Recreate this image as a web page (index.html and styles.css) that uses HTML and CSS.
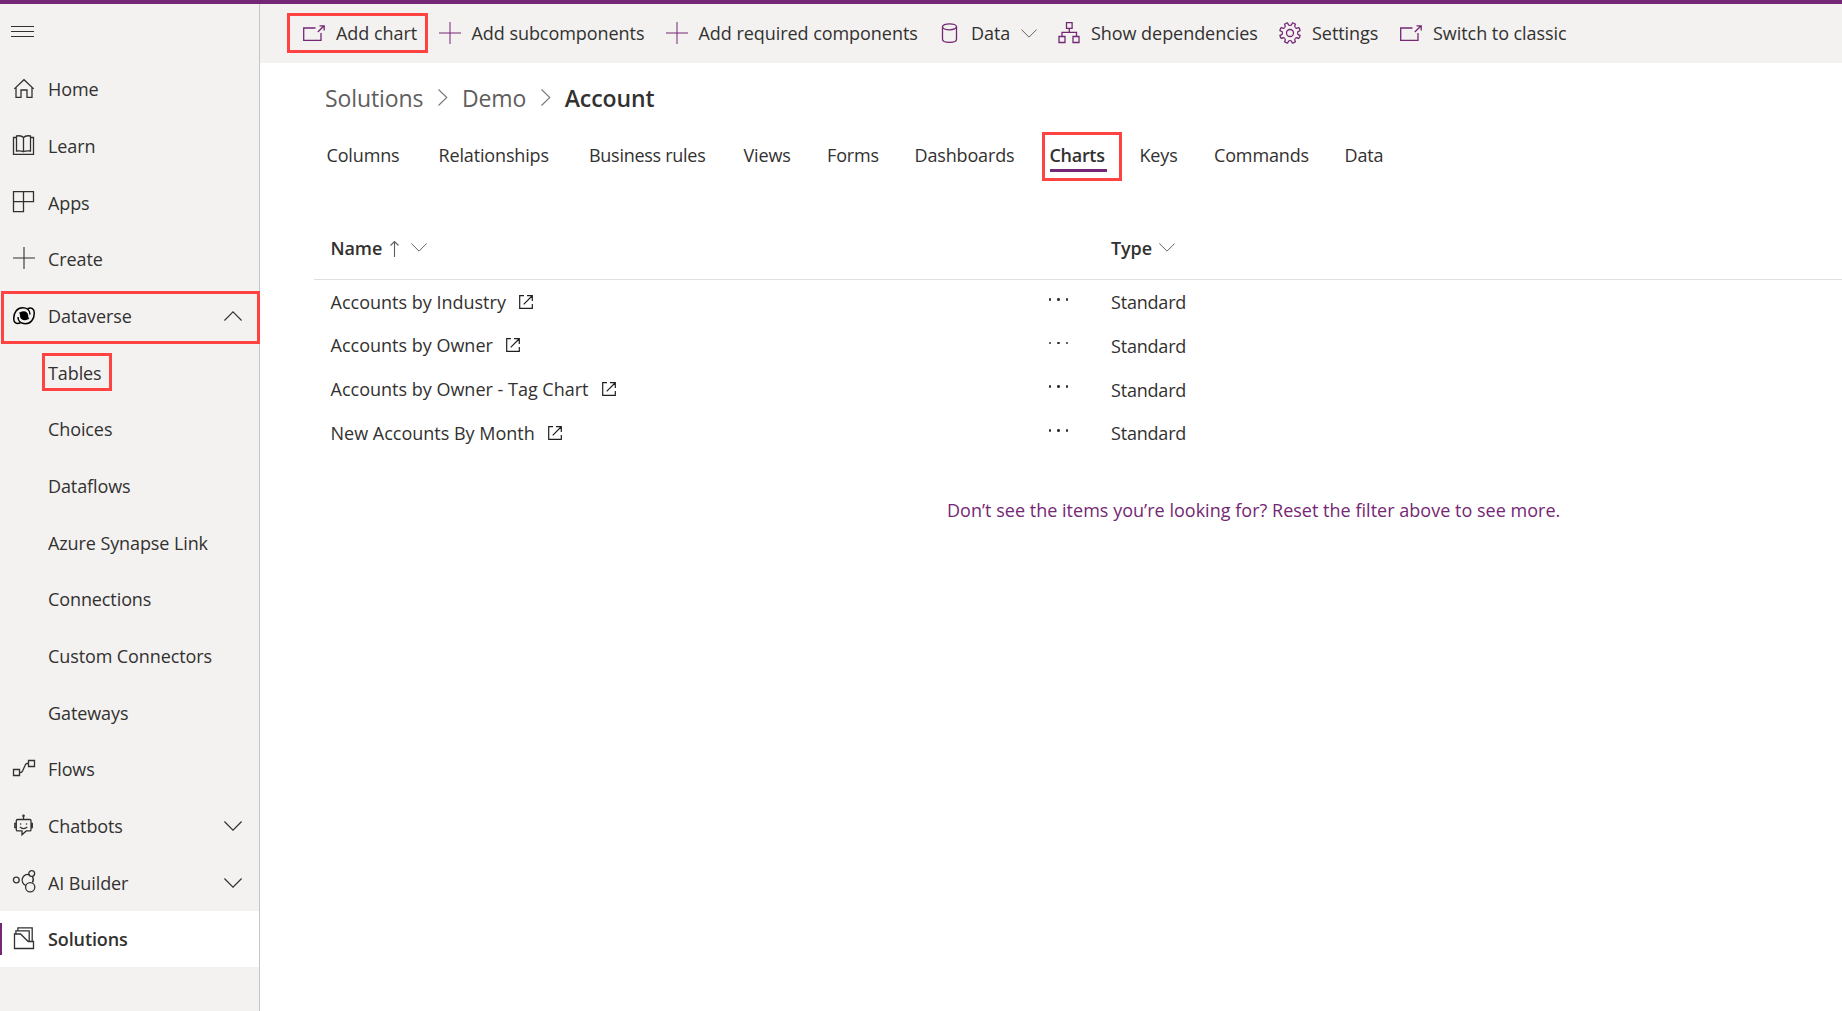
FILE: index.html
```
<!DOCTYPE html>
<html lang="en">
<head>
<meta charset="utf-8">
<title>Account - Charts</title>
<link rel="stylesheet" href="styles.css">
</head>
<body>
<svg class="defs" aria-hidden="true">
  <symbol id="open" viewBox="0 0 22 22"><path d="M12.500 6H.7v12.300H18V11M14.800 10l6-6M16.500 3.800h4.700v4.700"/></symbol>
  <symbol id="plus" viewBox="0 0 22 22"><path d="M0 11h22M11 0v22"/></symbol>
  <symbol id="popout" viewBox="0 0 14 14"><path d="M5 .7H.7v12.600h12.600V9M4.700 9.300L13 1M8 .7h5.300V6"/></symbol>
  <symbol id="down" viewBox="0 0 18 10"><path d="M.4.500L9 9.100 17.600.500"/></symbol>
</svg>
<div class="accent"></div>
<div class="shell">
  <nav class="sidebar">
    <div class="menu"><svg width="23" height="12" viewBox="0 0 23 12"><path d="M0 .500h23M0 5.500h23M0 10.500h23"/></svg></div>
    <a class="item"><svg class="icon" viewBox="0 0 24 24"><path d="M2.300 11.900L12 2.700l9.700 9.200M4 10.500v9.800h5V13h6v7.300h5v-9.800"/></svg>Home</a>
    <a class="item"><svg class="icon" viewBox="0 0 24 24"><path d="M4.500 3.500h-3v16.800h20V3.500h-3M11.500 17.500V3.500C10 1.800 6.500 1.600 4.500 2v15c3-.4 5.500-.2 7 .8 1.500-1 4-1.200 7-.8V2c-2-.4-5.500-.2-7 1.500"/></svg>Learn</a>
    <a class="item"><svg class="icon" viewBox="0 0 24 24"><path d="M1.500.700h20v10h-20zM11.500.700v20h-10v-10"/></svg>Apps</a>
    <a class="item"><svg class="icon" viewBox="0 0 24 24"><path class="thin" d="M1 11h22M12 0v22"/></svg>Create</a>
    <a class="item marked"><svg class="icon dv" viewBox="0 0 24 24"><path d="M8.500 18.800C4.500 20.500 1.700 19 1.700 14.500 1.700 8 5.500 3.800 10.500 3.800c4.500 0 7.500 2.700 7.500 6.700"/><path d="M15.500 4.700C19.500 3 22.300 4.500 22.300 9c0 6.500-3.800 10.700-8.800 10.700-4.500 0-7.500-2.700-7.500-6.700"/><path class="fill" d="M7 8.500c1.500.3 2-1.200 4.500-1.200 3 0 4.500 1.800 4.700 4.200.1 1.800.6 2.800 1.300 3.500-1.500-.3-2 1.200-4.500 1.200-3 0-5-1.700-5-4.200 0-1.700-.3-2.700-1-3.500z"/></svg>Dataverse<svg class="chev up"><use href="#down"/></svg></a>
    <a class="item sub"><span class="boxed">Tables</span></a>
    <a class="item sub">Choices</a>
    <a class="item sub">Dataflows</a>
    <a class="item sub">Azure Synapse Link</a>
    <a class="item sub">Connections</a>
    <a class="item sub">Custom Connectors</a>
    <a class="item sub">Gateways</a>
    <a class="item"><svg class="icon" viewBox="0 0 24 24"><path d="M1.500 12.500h6v6h-6zM16.500 3.500h6v6h-6zM7.500 15.500h1.300c1 0 1.200-.5 1.600-1.300l3-6.400c.4-.9.700-1.300 1.600-1.300h1.500"/></svg>Flows</a>
    <a class="item"><svg class="icon" viewBox="0 0 24 24"><path d="M5.500 5.500h12.300c.8 0 1.200.4 1.200 1.200v9c0 .8-.4 1.200-1.200 1.200h-3.600L10 20.700v-3.800H5.500c-.8 0-1.200-.4-1.200-1.200v-9c0-.8.4-1.200 1.200-1.200zM11.500 5.500V2M4.300 9.500H2.800v4h1.500M19 9.500h1.300v4H19M8 12.800c1.800 2.300 5.400 2.300 7.200 0"/><circle class="fill" cx="11.500" cy="1.800" r="1.300"/><circle class="fill" cx="8.700" cy="10" r=".8"/><circle class="fill" cx="14.500" cy="10" r=".8"/></svg>Chatbots<svg class="chev"><use href="#down"/></svg></a>
    <a class="item"><svg class="icon" viewBox="0 0 24 24"><circle cx="4.300" cy="9" r="2.900"/><path d="M13.800 14.500a5.700 5.700 0 1 1 4-10.700M20.300 5.300c1.300 1.900 1.300 4.300.2 6.300"/><circle cx="19.700" cy="2.500" r="2.900"/><circle cx="18.200" cy="16.200" r="4.600"/></svg>AI Builder<svg class="chev"><use href="#down"/></svg></a>
    <a class="item selected"><svg class="icon" viewBox="0 0 24 24"><path d="M2.500 21.500V7h6l7.700 7.500h5.300v7zM3.900 7V3.800h13.300v10.700M5.900 3.800V.800h14.300v13.700"/></svg>Solutions</a>
  </nav>
  <main class="main">
    <div class="commands">
      <a class="cmd framed"><svg class="tool"><use href="#open"/></svg>Add chart</a>
      <a class="cmd"><svg class="tool thin"><use href="#plus"/></svg>Add subcomponents</a>
      <a class="cmd"><svg class="tool thin"><use href="#plus"/></svg>Add required components</a>
      <a class="cmd"><svg class="tool" viewBox="0 0 22 22"><path d="M4.500 4.800v12.400c0 4.200 14 4.200 14 0V4.800"/><ellipse cx="11.500" cy="4.800" rx="7" ry="3"/></svg>Data<svg class="caret"><use href="#down"/></svg></a>
      <a class="cmd"><svg class="tool" viewBox="0 0 22 22"><path d="M8.500.700h5.600v5.600H8.500zM11.300 6.300v4M4 14.500v-4.200h14.500v4.200M1 14.500h6v6H1zM15 14.500h6v6h-6z"/></svg>Show dependencies</a>
      <a class="cmd"><svg class="tool" viewBox="-11 -11 22 22"><g transform="rotate(22.500)"><path id="tooth" d="M-3.020-7.300C-2-6.900-1.600-8-1.600-10.200Q0-10.700 1.600-10.200C1.600-8 2-6.900 3.020-7.300"/><use href="#tooth" transform="rotate(45)"/><use href="#tooth" transform="rotate(90)"/><use href="#tooth" transform="rotate(135)"/><use href="#tooth" transform="rotate(180)"/><use href="#tooth" transform="rotate(225)"/><use href="#tooth" transform="rotate(270)"/><use href="#tooth" transform="rotate(315)"/></g><circle r="3.500"/></svg>Settings</a>
      <a class="cmd"><svg class="tool"><use href="#open"/></svg>Switch to classic</a>
    </div>
    <div class="crumbs">
      <span>Solutions</span><svg class="sep" viewBox="0 0 10 17"><path d="M.500.500l8.300 8-8.300 8"/></svg><span>Demo</span><svg class="sep" viewBox="0 0 10 17"><path d="M.500.500l8.300 8-8.300 8"/></svg><b>Account</b>
    </div>
    <div class="tabs">
      <a>Columns</a><a>Relationships</a><a class="snug">Business rules</a><a>Views</a><a>Forms</a><a>Dashboards</a><a class="active">Charts</a><a>Keys</a><a>Commands</a><a>Data</a>
    </div>
    <div class="table">
      <div class="row head"><div class="name">Name<svg class="sort" viewBox="0 0 9 16"><path d="M4.500.500V16M.500 4.500l4-4 4 4"/></svg><svg class="caret"><use href="#down"/></svg></div><span></span><div>Type<svg class="caret"><use href="#down"/></svg></div></div>
      <div class="row"><div class="name">Accounts by Industry<svg class="ext"><use href="#popout"/></svg></div><span class="dots"><i></i><i></i><i></i></span><div class="type">Standard</div></div>
      <div class="row"><div class="name">Accounts by Owner<svg class="ext"><use href="#popout"/></svg></div><span class="dots"><i></i><i></i><i></i></span><div class="type">Standard</div></div>
      <div class="row"><div class="name">Accounts by Owner - Tag Chart<svg class="ext"><use href="#popout"/></svg></div><span class="dots"><i></i><i></i><i></i></span><div class="type">Standard</div></div>
      <div class="row"><div class="name">New Accounts By Month<svg class="ext"><use href="#popout"/></svg></div><span class="dots"><i></i><i></i><i></i></span><div class="type">Standard</div></div>
    </div>
    <p class="hint">Don’t see the items you’re looking for? Reset the filter above to see more.</p>
  </main>
</div>
</body>
</html>
```
FILE: styles.css
```
*, *::before, *::after { box-sizing: border-box; }
body {
  margin: 0;
  height: 1011px;
  overflow: hidden;
  display: flex;
  flex-direction: column;
  font: 18px/24px "Open Sans", sans-serif;
  color: #323130;
  background: #fff;
}
svg { fill: none; stroke: #323130; stroke-width: 1.3; overflow: visible; flex: none; }
.defs { position: absolute; width: 0; height: 0; }
.fill { fill: #323130; stroke: none; }
.thin { stroke-width: 1.1; }
.accent { height: 4px; background: #742774; }
.shell { flex: 1; display: flex; min-height: 0; }

.sidebar { width: 260px; background: #f3f2f1; border-right: 1px solid #c8c6c4; }
.menu { height: 56.800px; padding: 22px 0 0 11px; }
.menu svg { display: block; stroke-width: 1; }
.item {
  position: relative;
  display: flex;
  align-items: center;
  height: 56.700px;
  padding: 0 17px 0 12px;
  letter-spacing: -.1px;
}
.icon { width: 24px; height: 24px; margin-right: 12px; }
.dv { stroke: #000; stroke-width: 1.500; }
.dv .fill { fill: #000; }
.sub { padding-left: 48px; }
.chev { width: 18px; height: 10px; margin-left: auto; stroke-width: 1.200; }
.up { transform: rotate(180deg); }
.selected { background: #fff; font-weight: 600; letter-spacing: -.1px; height: 56px; }
.selected::before { content: ""; position: absolute; left: 0; top: 12px; width: 2px; height: 32px; background: #742774; }
.marked::after, .boxed::after, .framed::after, .active::before {
  content: "";
  position: absolute;
  border: 3px solid #ff4343;
}
.marked::after { left: 1px; top: 3px; width: 259px; height: 53px; }
.boxed, .framed, .active { position: relative; }
.boxed::after { left: -6px; top: -8px; width: 70px; height: 38px; }

.main { flex: 1; }
.commands {
  display: grid;
  grid-template-columns: 136px 227px 272px 120px 221px 121px auto;
  align-items: center;
  height: 59px;
  padding: 0 0 1px 43px;
  background: #f3f2f1;
}
.cmd { display: flex; align-items: center; letter-spacing: -.05px; }
.tool { width: 22px; height: 22px; margin-right: 11px; stroke: #742774; }
.tool.thin { stroke-width: 1; margin-right: 10.500px; }
.caret { width: 16px; height: 9px; margin-left: 11px; stroke: #605e5c; stroke-width: 1.100; }
.framed::after { left: -16px; top: -8px; width: 141px; height: 40px; }

.crumbs {
  display: flex;
  align-items: center;
  height: 32px;
  margin: 19px 0 0 65px;
  font-size: 23px;
  line-height: 32px;
  letter-spacing: -.1px;
  color: #605e5c;
}
.crumbs b { font-weight: 600; color: #323130; }
.sep { width: 10px; height: 17px; margin: -2px 14px 0 14.500px; stroke: #797775; stroke-width: 1.100; }

.tabs {
  display: grid;
  grid-template-columns: 112px 150.500px 154.500px 83.500px 87.500px 135px 90px 74.500px 130.500px auto;
  margin: 24px 0 0 66.500px;
  line-height: 34px;
  letter-spacing: -.15px;
}
.snug { letter-spacing: -.28px; }
.active { font-weight: 600; letter-spacing: -.3px; }
.active::after { content: ""; position: absolute; left: 0; bottom: 0; width: 57px; height: 3px; background: #742774; }
.active::before { left: -8px; top: -6px; width: 80px; height: 49px; }

.table { margin: 44px 0 0 54px; }
.row {
  display: grid;
  grid-template-columns: 717px 63.500px 1fr;
  align-items: center;
  height: 43.700px;
  padding-left: 16.500px;
}
.row > div { display: flex; align-items: center; }
.head { height: 64px; border-bottom: 1px solid #e1dfdd; font-weight: 600; letter-spacing: -.1px; }
.head .caret { margin: -1px 0 0 7px; }
.head .name .caret { margin-left: 12px; }
.sort { width: 9px; height: 16px; margin: 3px 0 0 8px; stroke: #605e5c; stroke-width: 1.100; }
.row:not(.head) { position: relative; top: -.100px; }
.ext { width: 14px; height: 14px; margin-left: 13px; stroke-width: 1.200; stroke: #201f1e; }
.dots { display: flex; gap: 6px; margin: -5px 0 0 1px; }
.dots i { width: 2.500px; height: 2.500px; border-radius: 50%; background: #323130; }
.type { letter-spacing: -.2px; padding-top: 1px; }
.hint { margin: 42px 0 0 687px; line-height: 26px; letter-spacing: .02px; color: #742774; }
```
